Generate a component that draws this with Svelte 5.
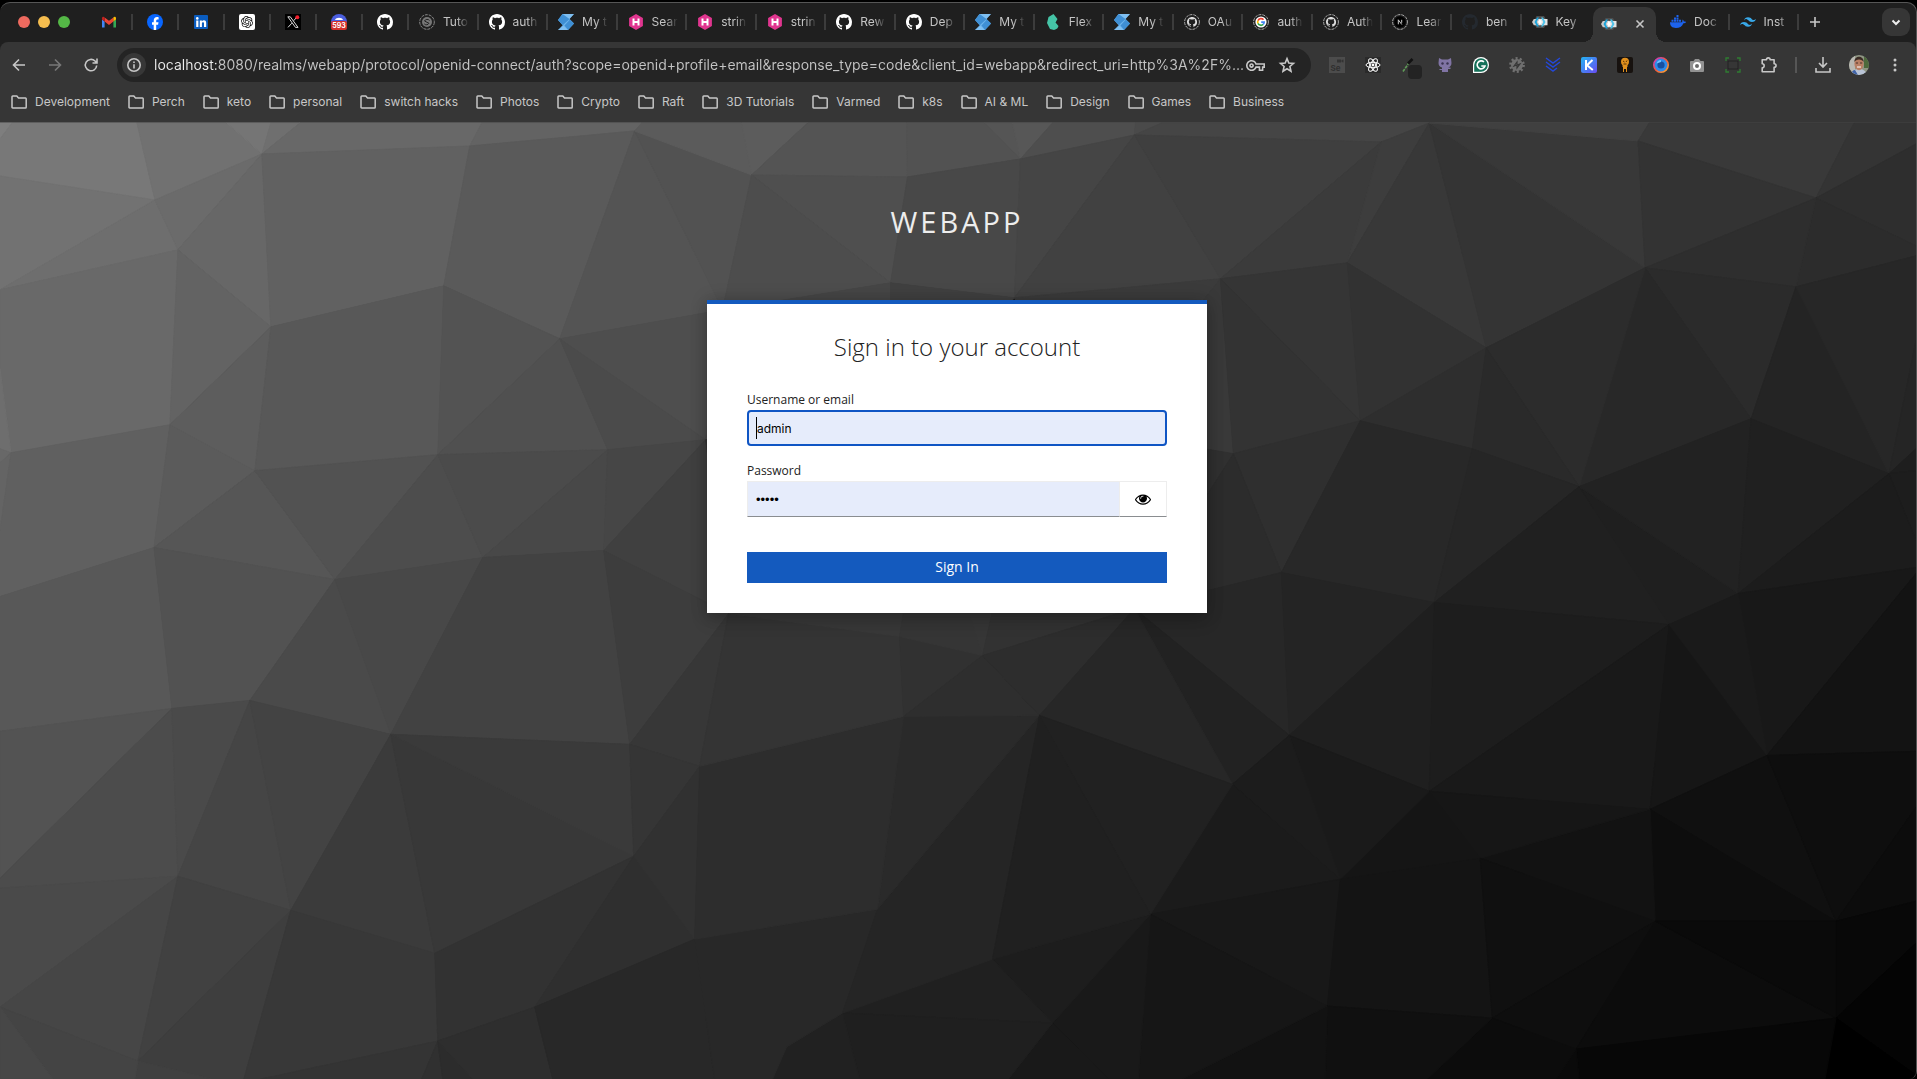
<script>
  // Low-poly backdrop: named mesh points, then faces as "grey point point point …".
  const mesh = {
    TL: [0, 122], t1: [12, 122], t2: [137, 122], t3: [227, 122], t4: [271, 122], t5: [300, 122], t6: [482, 122], t7: [642, 122],
    t8: [742, 122], t9: [808, 122], t10: [907, 122], t11: [985, 122], t12: [1013, 122], t13: [1053, 122], t14: [1136, 122],
    t15: [1162, 122], t17: [1650, 122], t18: [1855, 122], TR: [1917, 122],
    e1: [0, 138], e2: [0, 175], e3: [0, 289], e4: [0, 368], e5b: [0, 448], e5: [0, 462], e6: [0, 530], e7: [0, 596],
    e8: [0, 731], e9: [0, 878], e10: [0, 888], BL: [0, 1079],
    q1: [1917, 143], q2: [1917, 245], q3: [1917, 255], q4: [1917, 340], q5: [1917, 448], q6: [1917, 470], q7: [1917, 540],
    q8: [1917, 567], q9: [1917, 573], q11: [1917, 751], q12: [1917, 807], q13: [1917, 901], q14: [1917, 943], q15: [1917, 1075],
    BR: [1917, 1079],
    f1: [53, 1079], f2: [135, 1079], f3: [212, 1079], f4: [244, 1079], f5: [261, 1079], f6: [422, 1079], f7: [443, 1079],
    f8: [473, 1079], f9: [553, 1079], f11: [715, 1079], f12: [773, 1079], f13: [860, 1079], f14: [1009, 1079],
    f16: [1109, 1079], f17: [1139, 1079], f18: [1183, 1079], f19: [1326, 1079], f20: [1428, 1079], f22: [1557, 1079],
    f23: [1580, 1079], f24: [1826, 1079],
    a1: [155, 199], a2: [262, 153], a3: [178, 249], a4: [271, 326], a5: [444, 285], a6: [470, 145], a7: [635, 130],
    a8: [560, 338], a9: [170, 424], a10: [11, 452], a11: [255, 470], a12: [438, 454], a13: [608, 449], a14: [154, 547],
    a15: [335, 579], a16: [483, 557], a17: [604, 550],
    m1: [752, 174], m2: [908, 176], m3: [1021, 158], m4: [1135, 134], m5: [891, 282], m6: [1015, 297], m7: [1221, 278],
    m8: [723, 309], m9: [1234, 453], m10: [706, 439], c1: [891, 420], c2: [1100, 430],
    r1: [1382, 141], r2: [1430, 122], r3: [1348, 262], r4: [1639, 140], r5: [1646, 267], r6: [1817, 197], r7: [1797, 286],
    r8: [1487, 347], r9: [1361, 420], r10: [1473, 448], r11: [1580, 486], r12: [1752, 418], r13: [1890, 473], r14: [1739, 593],
    r15: [1282, 572], r16: [1435, 602], r17: [1670, 624], r18: [1290, 735], r19: [1768, 755], r20: [1430, 791],
    r21: [1651, 809], r22: [1481, 858], r23: [1341, 879], r24: [1656, 921], r25: [1837, 921], r26: [1837, 1018],
    r27: [1577, 1049], r28: [1493, 1018], r29: [1328, 1006],
    b1: [729, 613], b2: [900, 636], b3: [983, 655], b4: [904, 716], b5: [1040, 715], b6: [1135, 608], b7: [1233, 784],
    b8: [700, 766], b9: [878, 909], b10: [695, 939], b11: [993, 959], b12: [1151, 914], b13: [843, 1013], b14: [1053, 1023],
    b15: [787, 1047], g1: [905, 606], g2: [968, 606], g3: [994, 606],
    l1: [630, 744], l2: [391, 734], l3: [250, 700], l4: [172, 708], l5: [634, 856], l6: [435, 953], l7: [535, 1007],
    l8: [438, 1041], l9: [291, 910], l10: [178, 876], l11: [138, 1061], l12: [0, 1007]
  };

  const faces = `
7e TL t1 e1|78 t1 t2 a1 e2 e1|71 t2 t3 a2 a1|75 t3 t4 a2|6f t4 t5 a2|68 t5 t6 a6 a2|63 t6 t7 a7 a6
72 e2 a1 e3|6e a1 a3 e3|6b a1 a2 a3|67 a2 a4 a3|61 a2 a6 a5 a4|5a a6 a7 a8 a5|54 a7 m8 a8|52 a7 m1 m8
69 e3 a3 a9 a10 e4|6e e4 a10 e5b|68 e5b a10 e5|63 a3 a4 a9|5d a4 a11 a9|58 a4 a5 a12 a11|53 a5 a8 a12
50 a8 a13 a12|4e a8 m8 m10|4b a8 m10 a13|64 e5 a10 e6|60 a10 a9 a14 e7 e6|5b a9 a11 a14|56 a11 a15 a14
52 a11 a12 a15|4d a12 a16 a15|4b a12 a13 a16|48 a13 a17 a16|46 a13 m10 a17|40 a17 m10 b1
58 e7 a14 l4 e8|52 a14 a15 l3 l4|4a a15 l2 l3|48 a15 a16 l2|42 a16 a17 l1 l2|3d a17 b1 l1
53 e8 l4 e9|4c l4 l10 e10 e9|4a l3 l10 l4|45 l3 l9 l10|43 l3 l2 l9|3b l2 l6 l9|38 l2 l5 l6|3a l2 l1 l5
37 l1 b1 b8|35 l1 b8 l5|4a e10 l10 l12|46 l10 l11 l12|41 l10 l9 l11|3e l9 f4 f3 l11|38 l9 l6 l8 f5 f4
32 l6 l5 l7 l8|2f l5 b10 l7|31 l5 b8 b10|40 l11 f3 f2|44 l12 l11 f2 f1|47 l12 f1 BL|34 l8 f6 f5|30 l8 f7 f6
2c l8 f8 f7|2e l8 l7 f9 f8|28 l7 b10 f11 f9
5b t7 t8 m1 a7|5c t8 t9 m1|54 t9 t10 m2 m1|52 t10 t11 m3 m2|55 t11 t12 m3|57 t12 t13 m3|4e t13 t14 m4 m3
4a t14 t15 m4|45 t15 r2 r1 m4|4f m1 m2 m5|4d m1 m5 m8|48 m2 m3 m6 m5|45 m3 m4 m6|41 m4 m7 m6|3f m4 r1 m7
46 m8 m5 c1|4a m8 c1 m10|40 m5 m6 c1|3b m6 m7 c2|39 m7 m9 c2|30 m9 b6 c2|35 m10 c1 b1
3b r1 r3 m7|3d r1 r2 r3|38 r2 r8 r3|34 r2 r5 r8|38 r2 r4 r5|40 r2 t17 r4|39 t17 t18 r6 r4|34 t18 TR q1 r6
33 r4 r6 r5|2e r6 q1 q2|2c r6 q2 q3 r7|2e r5 r6 r7|2b r5 r7 r12|28 r5 r12 r11|2c r5 r11 r8|35 m7 r3 r9
33 m7 r9 m9|32 r3 r8 r9|2e r8 r10 r9|2a r8 r11 r10|24 r7 r13 r12|27 r7 q3 q4 r13|25 q4 q5 r13|1e q5 q6 r13
1d q6 q7 r13|2f m9 r9 r15|2c m9 r15 b6|28 r9 r10 r16 r15|26 r10 r11 r16|20 r11 r17 r16|1f r11 r14 r17
22 r11 r12 r14|20 r12 r13 r14|1c r13 q7 q8 r14|18 r14 q8 q9 r19|13 q9 q11 r19|27 b6 r15 r18|24 r15 r16 r18
1f r16 r20 r18|1d r16 r17 r20|19 r17 r21 r20|16 r17 r19 r21|1a r17 r14 r19|10 r19 r25 r21|0e r19 q11 q12 r25
0c q12 q13 r25|08 q13 q14 r26 r25|0d r21 r25 r24|12 r21 r24 r22|16 r20 r21 r22|15 r20 r22 r23|1a r18 r20 r23
22 b6 r18 b7|1c b7 r18 r23|1b b7 r23 b12|18 b12 r23 r29|14 r23 r22 r28 r29|10 r22 r24 r28|0e r24 r27 r28
0c r24 r26 r27|0a r24 r25 r26|04 q14 q15 r26|00 r26 q15 BR f24|07 r27 r26 f24 f23|0a r27 f23 f22
0c r28 r27 f22 f20|10 r29 r28 f20 f19|12 r29 f19 f18|16 b12 r29 f18 f17|19 b12 f17 f16 b14|19 b14 f16 f14
1d b12 b14 b11|20 b11 b14 b13|1f b13 b14 f14 f13|21 b13 f13 f12 b15|28 b10 b9 b13 b15 f12 f11
25 b9 b5 b11 b13|2a b4 b5 b9|2d b8 b4 b9 b10|34 b1 b2 b4 b8|38 b1 g1 b2|31 b2 b3 b4|35 b2 g1 g2 b3|36 g2 g3 b3
32 g3 b6 b3|2e b3 b5 b4|2d b3 b6 b5|27 b6 b7 b5|21 b5 b7 b12|20 b5 b12 b11`
    .trim()
    .split(/[|\n]/)
    .map((row) => {
      const [grey, ...keys] = row.trim().split(' ');
      return { fill: `#${grey}${grey}${grey}`, points: keys.map((k) => mesh[k].join(',')).join(' ') };
    });

  const pinned = [
    ['gmail', 'Gmail'], ['facebook', 'Facebook'], ['linkedin', 'LinkedIn'], ['openai', 'ChatGPT'],
    ['x', 'X'], ['badge', 'Notifications'], ['github', 'GitHub']
  ];
  const tabs = [
    ['target', 'Tuto'], ['github', 'auth'], ['stack', 'My t'], ['hash', 'Sear'], ['hash', 'strin'],
    ['hash', 'strin'], ['github', 'Rew'], ['github', 'Dep'], ['stack', 'My t'], ['flex', 'Flex'],
    ['stack', 'My t'], ['ghring', 'OAu'], ['gring', 'auth'], ['ghring', 'Auth'], ['nring', 'Lear'],
    ['ghdim', 'ben'], ['keycloak', 'Key'], ['keycloak', ''], ['docker', 'Doc'], ['tailwind', 'Inst']
  ];
  const extensions = [
    ['se', 'Selenium'], ['react', 'React'], ['dropper', 'Color picker'], ['cat', 'Octotree'], ['grammar', 'Grammar'],
    ['gear', 'Settings helper'], ['chevrons', 'Layers'], ['kite', 'K'], ['lamp', 'Lamp'], ['lens', 'Lens'],
    ['camera', 'Screenshot'], ['frame', 'Capture area'], ['puzzle', 'Extensions']
  ];
  const bookmarks = [
    'Development', 'Perch', 'keto', 'personal', 'switch hacks', 'Photos', 'Crypto', 'Raft', '3D Tutorials',
    'Varmed', 'k8s', 'AI & ML', 'Design', 'Games', 'Business'
  ];

  const octo =
    'M8 0C3.58 0 0 3.58 0 8c0 3.54 2.29 6.53 5.47 7.59.4.07.55-.17.55-.38 0-.19-.01-.82-.01-1.49-2.01.37-2.53-.49-2.69-.94-.09-.23-.48-.94-.82-1.13-.28-.15-.68-.52-.01-.53.63-.01 1.08.58 1.23.82.72 1.21 1.87.87 2.33.66.07-.52.28-.87.51-1.07-1.78-.2-3.64-.89-3.64-3.95 0-.87.31-1.59.82-2.15-.08-.2-.36-1.02.08-2.12 0 0 .67-.21 2.2.82.64-.18 1.32-.27 2-.27s1.36.09 2 .27c1.53-1.04 2.2-.82 2.2-.82.44 1.1.16 1.92.08 2.12.51.56.82 1.27.82 2.15 0 3.07-1.87 3.75-3.65 3.95.29.25.54.73.54 1.48 0 1.07-.01 1.93-.01 2.2 0 .21.15.46.55.38A8.01 8.01 0 0 0 16 8c0-4.42-3.58-8-8-8z';

  let url = $state(
    'localhost:8080/realms/webapp/protocol/openid-connect/auth?scope=openid+profile+email&response_type=code&client_id=webapp&redirect_uri=http%3A%2F%...'
  );
  let username = $state('admin');
  let password = $state('admin');
  let reveal = $state(false);
</script>

{#snippet icon(kind)}
  <svg class="icon" viewBox="0 0 16 16" aria-hidden="true">
    {#if kind === 'gmail'}
      <path fill="#4285f4" d="M1 13.5h2.6V7.6L1 5.6z" /><path fill="#34a853" d="M12.4 13.5H15V5.6l-2.6 2z" />
      <path fill="#ea4335" d="M3.6 7.6V3.4L8 6.7l4.4-3.3v4.2L8 10.9z" /><path fill="#c5221f" d="M1 5.6l2.6 2V3.4C2.400 2.300 1 3 1 4.300z" />
      <path fill="#fbbc04" d="M12.400 3.400v4.200l2.600-2V4.300c0-1.300-1.400-2-2.600-.9z" />
    {:else if kind === 'facebook'}
      <circle cx="8" cy="8" r="8" fill="#0866ff" />
      <path fill="#fff" d="M6.700 16v-5.300H5V8.200h1.700V7c0-2.700 1.200-4 3.400-4 .6 0 1.200.1 1.500.2v2.200h-1c-1 0-1.400.5-1.400 1.500v1.300h2.300l-.4 2.500H9.200V16z" />
    {:else if kind === 'linkedin'}
      <rect x="1" y="1" width="14" height="14" rx="1" fill="#0a5cbf" />
      <circle cx="4.300" cy="4.400" r="1.300" fill="#fff" />
      <path fill="#fff" d="M3.200 6.500h2.200V13H3.200zM6.800 6.500h2.100v.9c.4-.7 1.100-1.100 2-1.100 1.800 0 2.300 1.200 2.300 2.900V13H11V9.700c0-.8-.1-1.500-1-1.500s-1.100.7-1.100 1.500V13H6.800z" />
    {:else if kind === 'openai'}
      <rect width="16" height="16" rx="2" fill="#fff" />
      <path
        fill="#111"
        transform="translate(2 2) scale(.5)"
        d="M22.282 9.821a5.985 5.985 0 0 0-.516-4.911 6.046 6.046 0 0 0-6.510-2.900A6.065 6.065 0 0 0 4.981 4.182a5.985 5.985 0 0 0-3.998 2.900 6.046 6.046 0 0 0 .743 7.097 5.980 5.980 0 0 0 .511 4.911 6.051 6.051 0 0 0 6.515 2.900A5.985 5.985 0 0 0 13.260 24a6.056 6.056 0 0 0 5.772-4.206 5.989 5.989 0 0 0 3.998-2.900 6.056 6.056 0 0 0-.748-7.073zm-9.022 12.608a4.476 4.476 0 0 1-2.876-1.041l.142-.080 4.778-2.758a.795.795 0 0 0 .393-.681v-6.737l2.020 1.169a.071.071 0 0 1 .038.052v5.583a4.504 4.504 0 0 1-4.495 4.494zm-9.661-4.125a4.471 4.471 0 0 1-.535-3.014l.142.085 4.783 2.758a.771.771 0 0 0 .781 0l5.843-3.369v2.332a.080.080 0 0 1-.033.062L9.740 19.950a4.499 4.499 0 0 1-6.141-1.646zM2.341 7.896a4.485 4.485 0 0 1 2.366-1.973V11.600a.766.766 0 0 0 .388.677l5.814 3.354-2.020 1.169a.076.076 0 0 1-.071 0l-4.830-2.787A4.504 4.504 0 0 1 2.341 7.872zm16.596 3.856L13.104 8.364 15.119 7.200a.076.076 0 0 1 .071 0l4.830 2.791a4.494 4.494 0 0 1-.677 8.104v-5.677a.790.790 0 0 0-.407-.667zm2.011-3.023l-.142-.085-4.774-2.782a.776.776 0 0 0-.785 0L9.409 9.230V6.897a.066.066 0 0 1 .028-.062l4.830-2.787a4.499 4.499 0 0 1 6.680 4.660zM8.307 12.863l-2.020-1.164a.080.080 0 0 1-.038-.057V6.074a4.499 4.499 0 0 1 7.376-3.454l-.142.081L8.704 5.459a.795.795 0 0 0-.393.681zm1.098-2.365l2.602-1.500 2.607 1.500v2.999l-2.597 1.500-2.607-1.500z"
      />
    {:else if kind === 'x'}
      <rect width="16" height="16" fill="#000" />
      <path fill="none" stroke="#ddd" stroke-width="1" d="M2.800 2.800h2.500l7.700 10.600h-2.500zM12 3 8.700 6.700M3 13.400l3.800-4.200" />
      <circle cx="12.300" cy="3.300" r="2" fill="#f4212e" />
    {:else if kind === 'badge'}
      <circle cx="8" cy="8" r="8" fill="#4b5fe0" />
      <path fill="#fff" d="M4 6c1-3 7-3 8 0z" />
      <rect x="0" y="7" width="16" height="9" rx="2" fill="#d3302a" />
      <text x="8" y="14" font-size="7" font-weight="700" fill="#fff" text-anchor="middle">593</text>
    {:else if kind === 'github'}
      <path fill="#fff" d={octo} />
    {:else if kind === 'ghdim'}
      <path fill="#24292f" d={octo} />
    {:else if kind === 'target'}
      <circle cx="8" cy="8" r="7.300" fill="none" stroke="#8a8a8a" stroke-dasharray="3 1" />
      <circle cx="8" cy="8" r="5" fill="#777" />
      <path fill="none" stroke="#222" d="M10.500 6.500A3 3 0 0 0 5.500 7L10 9.300a3 3 0 0 1-4.700.6" />
    {:else if kind === 'stack'}
      <path fill="#6bb3ec" d="M4.500 0H16l-4.500 5L16 9.600 10 16H0l4.700-4.700L0 6z" />
      <path fill="#3f8fd4" d="M4.500 0 0 6l4.700 5.300L11.500 5zM10 16l6-6.400-4-4.200-5.500 6z" />
      <path fill="#93cbf5" d="M5 0h11l-4.500 5zM0 16h10l-4.500-4z" opacity=".5" />
    {:else if kind === 'hash'}
      <path fill="#e0358f" d="M8 0l6.900 4v8L8 16l-6.900-4V4z" />
      <path fill="#fff" d="M4.500 4.500h2v2.600h3V4.500h2v7h-2V8.900h-3v2.600h-2z" />
    {:else if kind === 'flex'}
      <path fill="#45c4a6" d="M8.500 0 3.500 3 2 9l3 6 4 1c3-1 4-2 4.500-4L10.500 8.500 12.500 5z" />
    {:else if kind === 'ghring' || kind === 'gring' || kind === 'nring'}
      <circle cx="8" cy="8" r="7.400" fill="none" stroke="#aaa" stroke-dasharray="3 1" />
      {#if kind === 'ghring'}
        <path fill="#ddd" transform="translate(3 3) scale(.63)" d={octo} />
      {:else if kind === 'gring'}
        <circle cx="8" cy="8" r="5.600" fill="#fff" />
        <g fill="none" stroke-width="1.700">
          <path stroke="#ea4335" d="M10.500 5.700A3.300 3.300 0 0 0 5 6.600" /><path stroke="#fbbc04" d="M5 6.600a3.300 3.300 0 0 0 0 2.800" />
          <path stroke="#34a853" d="M5 9.400a3.300 3.300 0 0 0 5.200 1" /><path stroke="#4285f4" d="M10.200 10.400A3.300 3.300 0 0 0 11.200 8.100H8.200" />
        </g>
      {:else}
        <circle cx="8" cy="8" r="5.800" fill="#000" />
        <path fill="none" stroke="#ccc" d="M6.300 10.300V5.800l3.500 4.700M9.700 5.800v3" />
      {/if}
    {:else if kind === 'keycloak'}
      <path fill="#4d4d4d" d="M4.500 2h7.500l2 3.500v5L12 14H4.500L1.500 8.500z" />
      <path fill="#c9c9c9" d="M1.800 5H9v6.300H1.800L0 8z" /><path fill="#e4e4e4" d="M9 5h6.500v6.300H9z" />
      <path fill="#1aa3da" d="M5 3.500h2L4.600 8 7 12.500H5L2.500 8z" /><path fill="#4fc3ea" d="M9 3.500h2L13.500 8 11 12.500H9L11.300 8z" />
      <path fill="#fff" d="M7.900 4.500 9.800 8l-1.900 3.500L6 8z" />
    {:else if kind === 'docker'}
      <path fill="#1d63ed" d="M0 8.300h12.200c.2-.9-.1-1.800.5-2.800.8.600 1.100 1.300 1.100 2 .8-.1 1.600 0 2.200.4-.5 1-1.400 1.300-2.600 1.300C12 12.500 9.500 14 6 14 2 14 0 12 0 8.300zM1.500 5.800h2v2h-2zM4 5.800h2v2H4zM6.500 5.800h2v2h-2zM9 5.800h2v2H9zM4 3.400h2v2H4zM6.500 3.400h2v2h-2zM6.500 1h2v2h-2z" />
    {:else if kind === 'tailwind'}
      <path fill="#38a8e8" transform="scale(.667)" d="M12.001 4.800c-3.200 0-5.200 1.600-6 4.800 1.200-1.600 2.600-2.200 4.200-1.800.913.228 1.565.89 2.288 1.624C13.666 10.618 15.027 12 18.001 12c3.200 0 5.200-1.600 6-4.800-1.200 1.600-2.600 2.200-4.200 1.800-.913-.228-1.565-.89-2.288-1.624C16.337 6.182 14.976 4.800 12.001 4.800zm-6 7.200c-3.200 0-5.200 1.600-6 4.800 1.200-1.600 2.600-2.200 4.200-1.800.913.228 1.565.89 2.288 1.624 1.177 1.194 2.538 2.576 5.512 2.576 3.200 0 5.200-1.600 6-4.800-1.200 1.600-2.600 2.200-4.200 1.800-.913-.228-1.565-.89-2.288-1.624C10.337 13.382 8.976 12 6.001 12z" />
    {:else if kind === 'se'}
      <rect width="16" height="16" fill="#4c4c4c" /><path fill="#333" d="M8 2.500h4v3H8zM12.500 3l2-.5v3l-2-.5z" />
      <text x="1.500" y="14" font-size="8" font-weight="700" fill="#303030">Se</text>
    {:else if kind === 'react'}
      <rect width="16" height="16" fill="#2a2a2a" />
      <g fill="none" stroke="#fff" stroke-width="1">
        {#each [0, 60, 120] as turn}<ellipse cx="8" cy="8" rx="7" ry="2.700" transform="rotate({turn} 8 8)" />{/each}
      </g>
      <circle cx="8" cy="8" r="1.400" fill="#fff" />
    {:else if kind === 'dropper'}
      <path stroke="#5f9a57" stroke-width="1.600" stroke-dasharray="3 1" d="M2 14.500 7.500 6.500" /><path stroke="#111" stroke-width="2.600" d="M7 6.500 11.500 2" />
      <rect x="7" y="8" width="14" height="14" rx="4" fill="#232323" />
    {:else if kind === 'cat'}
      <path fill="#8074a4" d="M2 1l3 1.500h6L14 1l.5 5c0 2.500-1.500 4-3.500 4.500h2.500v1.500H11v3H5v-2H2.500v-1H5v-1.500C3 10 1.500 8.500 1.500 6z" />
      <circle cx="5.500" cy="6.500" r="1.200" fill="#3a3350" /><circle cx="10.500" cy="6.500" r="1.200" fill="#3a3350" />
    {:else if kind === 'grammar'}
      <path fill="#fff" d="M8 0a8 8 0 1 1 0 16H0V8a8 8 0 0 1 8-8z" /><path fill="#16715a" d="M8 1.200a6.800 6.800 0 1 1 0 13.600H1.200V8A6.800 6.800 0 0 1 8 1.200z" />
      <path fill="none" stroke="#fff" stroke-width="1.600" d="M11 5a4 4 0 1 0 1 4H8.300" />
    {:else if kind === 'gear'}
      <circle cx="8" cy="8" r="6.400" fill="none" stroke="#6f6f6f" stroke-width="3" stroke-dasharray="2 2" />
      <circle cx="8" cy="8" r="6" fill="#6f6f6f" />
      <path fill="none" stroke="#363636" stroke-width="1.200" d="M5 9l3-4v3l3-1-3 4V8z" />
    {:else if kind === 'chevrons'}
      <path fill="none" stroke="#2448d8" stroke-width="1.500" d="M1 1l7 5 7-5M1 5l7 5 7-5M1 9l7 5 4-3" />
    {:else if kind === 'kite'}
      <defs><linearGradient id="kite" x1="0" y1="0" x2="1" y2="1"><stop stop-color="#23b4f4" /><stop offset="1" stop-color="#6a4bf2" /></linearGradient></defs>
      <rect width="16" height="16" rx="2" fill="url(#kite)" />
      <path fill="none" stroke="#fff" stroke-width="2" d="M5 3v10M11.500 3 6 8.300 11.800 13" />
    {:else if kind === 'lamp'}
      <rect width="16" height="16" rx="2" fill="#17120f" /><circle cx="8" cy="4.800" r="4" fill="#e0901e" />
      <path fill="#e0901e" d="M6 8h4l1 1-1 1v5H9v-3H7v3H6v-5L5 9z" /><path stroke="#5b3508" fill="none" d="M6 4l1.500 1M10 3.500l-1 1.500M6.500 7h3" />
    {:else if kind === 'lens'}
      <defs><linearGradient id="lens" x1="0" y1="0" x2="1" y2="1"><stop stop-color="#c43ad0" /><stop offset=".5" stop-color="#f0563c" /><stop offset="1" stop-color="#ffb030" /></linearGradient></defs>
      <circle cx="8" cy="8" r="7.200" fill="#2d8ae8" stroke="url(#lens)" stroke-width="1.600" /><circle cx="8" cy="8" r="3.600" fill="#174fa0" />
      <path fill="#6fc2ff" d="M3.500 6.500A5 5 0 0 1 8 3v2z" />
    {:else if kind === 'camera'}
      <path fill="#929292" d="M1 5q0-1 1-1h2.500L6 2h4l1.500 2H14q1 0 1 1v9q0 1-1 1H2q-1 0-1-1z" /><circle cx="8" cy="9" r="3" fill="#6a6a6a" stroke="#fff" stroke-width="2" />
    {:else if kind === 'frame'}
      <path fill="none" stroke="#2f7d32" stroke-width="1.300" d="M1 4V1h3M12 1h3v3M15 12v3h-3M4 15H1v-3" /><rect x="3" y="4" width="10" height="8" fill="none" stroke="#222" />
    {:else if kind === 'puzzle'}
      <path fill="none" stroke="#c7c7c7" stroke-width="1.600" stroke-linejoin="round" d="M1.200 2.800h4.300c0-2.600 3.600-2.600 3.600 0h4v4c2.600 0 2.600 3.600 0 3.600v4.400H1.200v-4c2.600 0 2.600-4 0-4z" />
    {/if}
  </svg>
{/snippet}

<div class="screen">
  <div class="window">
    <header class="chrome">
      <nav class="tabstrip" aria-label="Tabs">
        <div class="lights"><i class="red"></i><i class="amber"></i><i class="green"></i></div>
        {#each pinned as [kind, name]}
          <button class="pin" aria-label={name}>{@render icon(kind)}</button>
        {/each}
        {#each tabs as [kind, name]}
          {#if name}
            <button class="tab" class:bare={kind === 'keycloak'}>{@render icon(kind)}<span>{name}</span></button>
          {:else}
            <div class="tab current">
              {@render icon(kind)}
              <button class="close" aria-label="Close tab">
                <svg viewBox="0 0 16 16" aria-hidden="true"><path d="M4.500 4.500l7 7M11.500 4.500l-7 7" /></svg>
              </button>
            </div>
          {/if}
        {/each}
        <div class="strip-end">
          <button class="new" aria-label="New tab"><svg viewBox="0 0 16 16" aria-hidden="true"><path d="M8 3v10M3 8h10" /></svg></button>
          <button class="search" aria-label="Search tabs"><svg viewBox="0 0 16 16" aria-hidden="true"><path d="M4.500 6.500 8 10l3.500-3.500" /></svg></button>
        </div>
      </nav>

      <div class="toolbar">
        <button class="tool" aria-label="Back"><svg viewBox="0 0 16 16" aria-hidden="true"><path d="M14 8H3M8 2.500 2.500 8 8 13.500" /></svg></button>
        <button class="tool faded" aria-label="Forward"><svg viewBox="0 0 16 16" aria-hidden="true"><path d="M2 8h11M8 2.500 13.500 8 8 13.500" /></svg></button>
        <button class="tool" aria-label="Reload"><svg viewBox="0 0 16 16" aria-hidden="true"><path d="M13.700 8.500A5.700 5.700 0 1 1 12 4l1.800 1.700M14 1.500V6H9.500" /></svg></button>
        <div class="omnibox">
          <button class="info" aria-label="Site information"><svg viewBox="0 0 16 16" aria-hidden="true"><circle cx="8" cy="8" r="6.200" /><path d="M8 7.300V11.500M8 4.500V6" /></svg></button>
          <input type="text" class="url" aria-label="Address" bind:value={url} />
          <button class="mini" aria-label="Saved passwords">
            <svg class="key" viewBox="0 0 24 24" aria-hidden="true"><path d="M22 19h-6v-4h-2.680c-1.140 2.420-3.600 4-6.320 4-3.860 0-7-3.140-7-7s3.140-7 7-7c2.720 0 5.170 1.580 6.320 4H24v6h-2v4zm-4-2h2v-4h2v-2H11.940l-.23-.67C11.010 8.340 9.110 7 7 7c-2.760 0-5 2.240-5 5s2.240 5 5 5c2.110 0 4.010-1.340 4.710-3.330l.23-.67H18v4zM7 15c-1.650 0-3-1.350-3-3s1.350-3 3-3 3 1.350 3 3-1.350 3-3 3zm0-4c-.55 0-1 .45-1 1s.45 1 1 1 1-.45 1-1-.45-1-1-1z" /></svg>
          </button>
          <button class="mini star" aria-label="Bookmark this page"><svg viewBox="0 0 16 16" aria-hidden="true"><path d="M8 1.600l1.800 4.400 4.700.4-3.600 3.100 1.100 4.700L8 11.700l-4 2.500 1.100-4.700L1.500 6.400l4.700-.4z" /></svg></button>
        </div>
        {#each extensions as [kind, name]}
          <button class="tool" aria-label={name}>{@render icon(kind)}</button>
        {/each}
        <span class="rule"></span>
        <button class="tool" aria-label="Downloads"><svg viewBox="0 0 16 16" aria-hidden="true"><path d="M8 0v9.500M4 6l4 4 4-4M1 11v4h14v-4" /></svg></button>
        <button class="tool" aria-label="Profile">
          <svg class="avatar" viewBox="0 0 20 20" aria-hidden="true">
            <defs><clipPath id="face"><circle cx="10" cy="10" r="10" /></clipPath></defs>
            <g clip-path="url(#face)">
              <rect width="20" height="20" fill="#8f9684" /><rect width="6" height="20" fill="#b9b8b2" /><rect x="15" width="5" height="13" fill="#4d6a3c" />
              <path fill="#b9c4d6" d="M2 20c1-5 5-6 8-6s7 1 8 6z" /><path fill="#3f63a8" d="M2 20c0-3 2-5 4-5l3 5z" />
              <ellipse cx="10" cy="8.800" rx="4.600" ry="6.400" fill="#b97f64" /><path fill="#3c2d26" d="M5.300 7C5.500 0 14.500 0 14.700 7 13 3.500 7 3.500 5.300 7z" />
              <path stroke="#fff" d="M8 12h4" /><path stroke="#4a3129" d="M6.800 8h2.200M11 8h2.200" />
            </g>
          </svg>
        </button>
        <button class="tool" aria-label="Menu"><svg class="dots" viewBox="0 0 16 16" aria-hidden="true"><circle cx="8" cy="3" r="1.500" /><circle cx="8" cy="8" r="1.500" /><circle cx="8" cy="13" r="1.500" /></svg></button>
      </div>

      <nav class="bookmarks" aria-label="Bookmarks">
        {#each bookmarks as name}
          <a href="#top">
            <svg viewBox="0 0 16 14" aria-hidden="true"><path d="M1.800 1h4l1.700 2h7q.7 0 .7.800v8.400q0 .8-.7.8H1.700q-.7 0-.7-.8V1.800q0-.8.800-.8z" /></svg>{name}
          </a>
        {/each}
      </nav>
    </header>

    <main>
      <svg class="backdrop" viewBox="0 122 1917 957" preserveAspectRatio="none" aria-hidden="true">
        {#each faces as face}
          <polygon points={face.points} fill={face.fill} stroke={face.fill} />
        {/each}
      </svg>
      <div class="page">
        <h1>WEBAPP</h1>
        <form class="card" onsubmit={(e) => e.preventDefault()}>
          <h2>Sign in to your account</h2>
          <label for="username">Username or email</label>
          <div class="field focused">
            <input id="username" type="text" bind:value={username} />
            <span class="caret"></span>
          </div>
          <label for="password">Password</label>
          <div class="field split">
            <input id="password" type={reveal ? 'text' : 'password'} bind:value={password} />
            <button type="button" class="eye" aria-label="Show password" onclick={() => (reveal = !reveal)}>
              <svg viewBox="0 128 1792 1536" aria-hidden="true"><path d="M1664 960q-152-236-381-353 61 104 61 225 0 185-131.500 316.500t-316.500 131.500-316.500-131.500-131.500-316.500q0-121 61-225-229 117-381 353 133 205 333.500 326.500t434.500 121.500 434.500-121.500 333.500-326.500zm-720-384q0-20-14-34t-34-14q-125 0-214.500 89.500t-89.500 214.500q0 20 14 34t34 14 34-14 14-34q0-86 61-147t147-61q20 0 34-14t14-34zm848 384q0 34-20 69-140 230-376.500 368.500t-499.500 138.500-499.500-139-376.500-368q-20-35-20-69t20-69q140-229 376.500-368t499.500-139 499.500 139 376.500 368q20 35 20 69z" /></svg>
            </button>
          </div>
          <button type="submit" class="submit">Sign In</button>
        </form>
      </div>
    </main>
  </div>
</div>

<style>
  :global(body) {
    background: #000;
  }
  * {
    box-sizing: border-box;
  }
  button {
    border: 0;
    padding: 0;
    background: none;
    color: inherit;
    font: inherit;
  }
  svg {
    display: block;
    width: 16px;
    height: 16px;
    overflow: visible;
  }
  .screen {
    display: flex;
    min-height: 100vh;
    padding-top: 2px;
    font-family: Inter, 'Liberation Sans', sans-serif;
  }
  .window {
    flex: 1;
    min-width: 0;
    display: flex;
    flex-direction: column;
    overflow: hidden;
    border: solid #565656;
    border-width: 1px 1px 0 0;
    border-radius: 10px 10px 8px 0;
    background: #1f1f1f;
  }
  .tabstrip {
    display: flex;
    align-items: center;
    height: 39px;
    padding-bottom: 1px;
    color: #c4c4c4;
    font-size: 12px;
  }
  .lights {
    display: flex;
    flex: 0 0 86px;
    gap: 8px;
    padding-left: 18px;
  }
  .lights i {
    width: 12px;
    height: 12px;
    border-radius: 50%;
  }
  .red {
    background: #ee6a5f;
  }
  .amber {
    background: #f5bd4f;
  }
  .green {
    background: #54b846;
  }
  .pin,
  .tab {
    position: relative;
    display: flex;
    align-items: center;
    height: 16px;
  }
  .pin {
    flex: 0 0 46px;
    justify-content: center;
  }
  .tab {
    flex: 1 1 0;
    min-width: 0;
    gap: 8px;
    padding: 0 8px 0 11px;
  }
  .pin::after,
  .tab::after {
    content: '';
    position: absolute;
    right: -1px;
    width: 2px;
    height: 16px;
    background: #3c3c3c;
  }
  .tab.bare::after,
  .tab.current::after {
    display: none;
  }
  .tab .icon {
    flex: none;
  }
  .tab span {
    flex: 1;
    text-align: left;
    white-space: nowrap;
    line-height: 16px;
    mask-image: linear-gradient(90deg, #000 14px, transparent 26px);
  }
  .tab.current {
    flex-grow: 0;
    flex-basis: 63px;
    align-self: flex-end;
    justify-content: space-between;
    height: 35px;
    margin: 0 3px -1px;
    padding: 0 8px 1px;
    border-radius: 10px 10px 0 0;
    background: #363636;
  }
  .tab.current::before {
    content: '';
    position: absolute;
    bottom: 0;
    left: -10px;
    right: -10px;
    height: 10px;
    background: radial-gradient(circle at 0 0, transparent 10px, #363636 10px) left / 10px 10px no-repeat,
      radial-gradient(circle at 100% 0, transparent 10px, #363636 10px) right / 10px 10px no-repeat;
  }
  .close svg,
  .new svg,
  .search svg,
  .tool svg:not(.icon),
  .info svg,
  .mini svg {
    fill: none;
    stroke: #c7c7c7;
    stroke-width: 1.6;
  }
  .strip-end {
    display: flex;
    align-items: center;
    justify-content: space-between;
    flex: 0 0 118px;
    padding: 0 6px 0 9px;
  }
  .search {
    display: grid;
    place-items: center;
    width: 28px;
    height: 28px;
    border-radius: 9px;
    background: #363636;
  }
  .search svg {
    stroke: #eee;
    stroke-width: 2;
  }
  .toolbar {
    display: flex;
    align-items: center;
    height: 46px;
    padding: 0 3px 0 1px;
    border-radius: 8px 8px 0 0;
    background: #363636;
  }
  .tool {
    display: grid;
    place-items: center;
    flex: 0 0 36px;
    height: 34px;
  }
  .toolbar .tool svg.avatar {
    width: 20px;
    height: 20px;
    stroke-width: 1;
    stroke: none;
  }
  .toolbar .tool svg.dots {
    fill: #c7c7c7;
    stroke: none;
  }
  .faded {
    opacity: 0.45;
  }
  .omnibox {
    display: flex;
    align-items: center;
    flex: 1;
    min-width: 0;
    height: 34px;
    margin: 0 8px;
    padding: 0 14px 0 5px;
    border-radius: 17px;
    background: #242424;
  }
  .info {
    display: grid;
    place-items: center;
    flex: 0 0 24px;
    height: 24px;
    margin-right: 8px;
    border-radius: 50%;
    background: #373737;
  }
  .url {
    flex: 1;
    min-width: 0;
    padding: 0;
    border: 0;
    outline: 0;
    color: #c9c9c9;
    background: linear-gradient(90deg, #ececec 62px, #c4c4c4 62px) text;
    -webkit-text-fill-color: transparent;
    font: 14px/20px Inter, 'Liberation Sans', sans-serif;
  }
  .mini {
    display: grid;
    place-items: center;
    flex: 0 0 20px;
  }
  .star {
    margin-left: 12px;
  }
  .omnibox .mini svg.key {
    width: 19px;
    height: 19px;
    fill: #c7c7c7;
    stroke: none;
  }
  .rule {
    flex: none;
    width: 2px;
    height: 16px;
    margin: 0 8px;
    background: #565656;
  }
  .bookmarks {
    display: flex;
    gap: 18px;
    height: 35px;
    padding: 6px 11px 0;
    border-bottom: 1px solid #454545;
    background: #363636;
  }
  .bookmarks a {
    display: flex;
    align-items: center;
    gap: 8px;
    height: 16px;
    color: #c7c7c7;
    font-size: 12px;
    line-height: 16px;
    text-decoration: none;
    white-space: nowrap;
  }
  .bookmarks svg {
    height: 14px;
    fill: none;
    stroke: #c7c7c7;
    stroke-width: 1.5;
  }
  main {
    position: relative;
    flex: 1;
    font-family: 'Open Sans', sans-serif;
  }
  .backdrop {
    position: absolute;
    inset: 0;
    width: 100%;
    height: 100%;
  }
  .page {
    position: relative;
    display: flex;
    flex-direction: column;
    align-items: center;
    padding: 79px 2px 40px 0;
  }
  h1 {
    margin: 0 0 58px;
    color: #ededed;
    font-size: 29px;
    font-weight: 400;
    line-height: 40px;
    letter-spacing: 3px;
  }
  .card {
    display: flex;
    flex-direction: column;
    width: 500px;
    max-width: 100%;
    padding: 27px 40px 30px;
    border-top: 4px solid #145abe;
    background: #fff;
    color: #222;
    box-shadow: 0 8px 16px rgba(0, 0, 0, 0.16), 0 0 16px rgba(0, 0, 0, 0.2);
  }
  h2 {
    margin: 0 0 28px;
    font-size: 24px;
    font-weight: 300;
    line-height: 32px;
    text-align: center;
  }
  label {
    margin-bottom: 1px;
    font-size: 12px;
    line-height: 18px;
  }
  .field {
    position: relative;
    display: flex;
    height: 36px;
    margin-bottom: 16px;
  }
  .field input {
    flex: 1;
    min-width: 0;
    padding: 2px 8px 0;
    border: 1px solid #ededed;
    border-bottom-color: #8a8d90;
    border-radius: 0;
    outline: 0;
    background: #e6ecfb;
    color: #000;
    font: 12px/20px Inter, 'Liberation Sans', sans-serif;
  }
  .field.focused input {
    border: 2px solid #0f55c4;
    border-radius: 4px;
  }
  .caret {
    position: absolute;
    left: 9px;
    top: 7px;
    width: 1px;
    height: 22px;
    background: #000;
  }
  .field.split {
    margin-bottom: 35px;
  }
  .field.split input {
    border-right: 0;
    font: 13px/20px 'Liberation Sans', sans-serif;
  }
  .eye {
    display: grid;
    place-items: center;
    flex: 0 0 48px;
    border: 1px solid #ededed;
    border-bottom-color: #8a8d90;
  }
  .submit {
    height: 31px;
    padding-bottom: 2px;
    background: #145abe;
    color: #fff;
    font-size: 14px;
    font-weight: 500;
    line-height: 20px;
  }
</style>
